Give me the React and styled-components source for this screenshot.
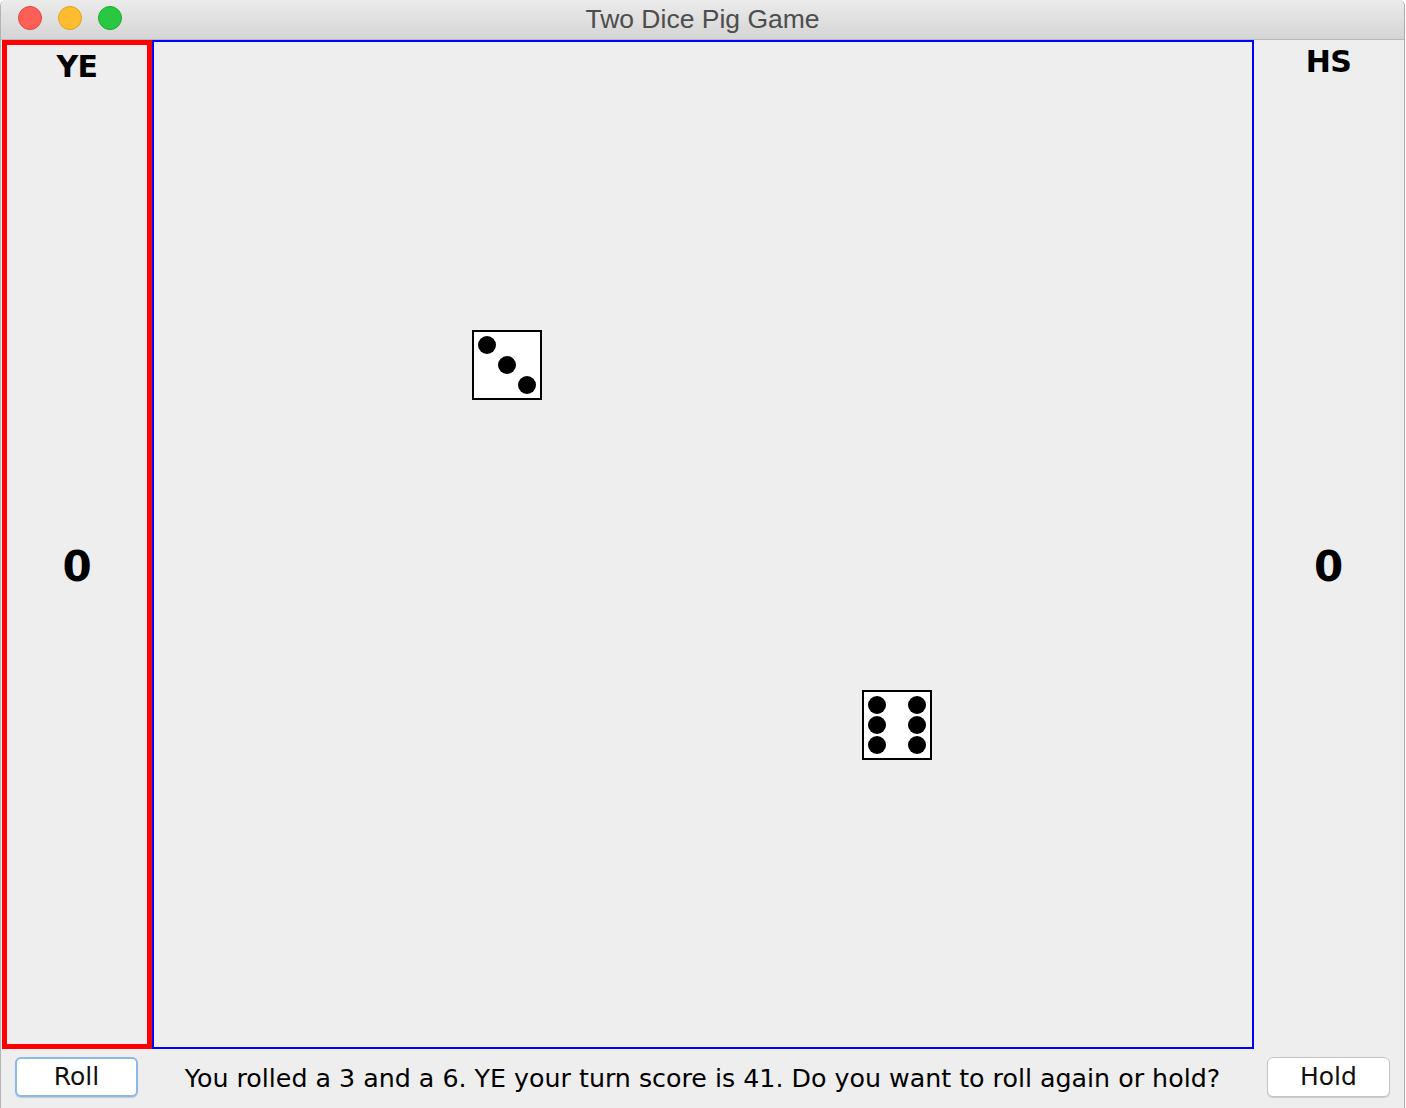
import React from "react";
import styled, { createGlobalStyle } from "styled-components";

const GlobalStyle = createGlobalStyle`
  html, body {
    margin: 0;
    padding: 0;
    background: #ffffff;
  }
  body {
    font-family: "DejaVu Sans", "Liberation Sans", sans-serif;
  }
`;

const PIPS = {
  3: [
    [15, 15],
    [35, 35],
    [55, 55],
  ],
  6: [
    [15, 15],
    [55, 15],
    [15, 35],
    [55, 35],
    [15, 55],
    [55, 55],
  ],
};

const Die = ({ value, x, y }) => (
  <DieBox style={{ left: x, top: y }}>
    <svg width="70" height="70" viewBox="0 0 70 70">
      <rect x="1" y="1" width="68" height="68" fill="#fff" stroke="#000" strokeWidth="2" />
      {PIPS[value].map(([cx, cy], i) => (
        <circle key={i} cx={cx} cy={cy} r="9" fill="#000" />
      ))}
    </svg>
  </DieBox>
);

const ScoreColumn = ({ name, score, active }) => (
  <Column $active={active}>
    <PlayerName>{name}</PlayerName>
    <Score>{score}</Score>
  </Column>
);

const App = () => {
  return (
    <>
      <GlobalStyle />
      <Window>
        <TitleBar>
          <Lights>
            <Light $color="#fe5f57" $edge="#e0443e" />
            <Light $color="#febc2e" $edge="#dea123" />
            <Light $color="#28c840" $edge="#1aab29" />
          </Lights>
          <Title>Two Dice Pig Game</Title>
        </TitleBar>
        <Body>
          <ScoreColumn name="YE" score={0} active />
          <Board>
            <Die value={3} x={318} y={288} />
            <Die value={6} x={708} y={648} />
          </Board>
          <ScoreColumn name="HS" score={0} />
        </Body>
        <Controls>
          <Button $focused>Roll</Button>
          <Message>
            You rolled a 3 and a 6. YE your turn score is 41. Do you want to roll again or hold?
          </Message>
          <Button>Hold</Button>
        </Controls>
      </Window>
    </>
  );
};

export default App;

const Window = styled.div`
  width: 1405px;
  height: 1108px;
  box-sizing: border-box;
  display: flex;
  flex-direction: column;
  background: #eeeeee;
  border-left: 1px solid #b4b4b4;
  border-right: 1px solid #a9a9a9;
  border-radius: 6px 6px 0 0;
  overflow: hidden;
`;

const TitleBar = styled.div`
  position: relative;
  height: 40px;
  flex-shrink: 0;
  box-sizing: border-box;
  display: flex;
  align-items: center;
  justify-content: center;
  background: linear-gradient(#ebebeb, #d5d5d5);
  border-bottom: 1px solid #b9b9b9;
`;

const Lights = styled.div`
  position: absolute;
  left: 17px;
  top: 6px;
  display: flex;
  gap: 16px;
`;

const Light = styled.span`
  width: 24px;
  height: 24px;
  box-sizing: border-box;
  border-radius: 50%;
  background: ${(p) => p.$color};
  border: 1px solid ${(p) => p.$edge};
`;

const Title = styled.div`
  font-family: "Liberation Sans", Arial, sans-serif;
  font-size: 26.5px;
  color: #4d4d4d;
  margin-top: -1px;
`;

const Body = styled.div`
  height: 1009px;
  flex-shrink: 0;
  display: flex;
  padding-left: 1px;
`;

const Column = styled.div`
  width: ${(p) => (p.$active ? "150px" : "149px")};
  flex-shrink: 0;
  box-sizing: border-box;
  display: flex;
  flex-direction: column;
  border: ${(p) => (p.$active ? "5px solid #ff0000" : "none")};
  font-weight: bold;
  color: #000;
`;

const PlayerName = styled.div`
  height: 43px;
  display: flex;
  align-items: center;
  justify-content: center;
  font-size: 30px;
  letter-spacing: -0.5px;
`;

const Score = styled.div`
  flex: 1;
  display: flex;
  align-items: center;
  justify-content: center;
  font-size: 42px;
`;

const Board = styled.div`
  position: relative;
  width: 1102px;
  flex-shrink: 0;
  box-sizing: border-box;
  border: 2px solid #0000ff;
`;

const DieBox = styled.div`
  position: absolute;
  width: 70px;
  height: 70px;
  svg {
    display: block;
  }
`;

const Controls = styled.div`
  flex: 1;
  display: flex;
  align-items: flex-start;
  justify-content: space-between;
  padding: 8px 14px 0 14px;
`;

const Button = styled.button`
  width: 123px;
  height: 40px;
  box-sizing: border-box;
  border-radius: 6px;
  background: #ffffff;
  font-family: "DejaVu Sans", sans-serif;
  font-size: 25px;
  color: #111;
  padding: 0 0 2px 0;
  border: ${(p) => (p.$focused ? "2px solid #8bb9ea" : "1px solid #c4c4c4")};
  box-shadow: 0 1px 1px rgba(0, 0, 0, 0.15);
`;

const Message = styled.div`
  font-family: "DejaVu Sans", sans-serif;
  font-size: 25.3px;
  color: #000;
  line-height: 40px;
  padding-top: 2px;
  white-space: nowrap;
`;
